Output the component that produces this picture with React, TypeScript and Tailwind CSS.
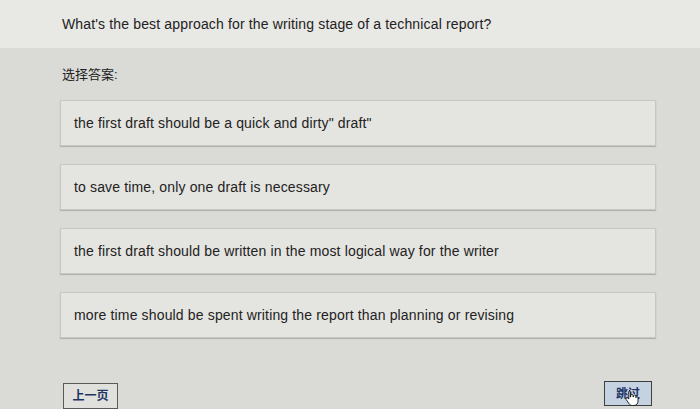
import React from 'react'

const options = [
  'the first draft should be a quick and dirty" draft"',
  'to save time, only one draft is necessary',
  'the first draft should be written in the most logical way for the writer',
  'more time should be spent writing the report than planning or revising',
]

function HandCursor() {
  return (
    <svg width="14" height="17" viewBox="0 0 14 17" className="absolute left-[20px] top-[7px]">
      <path
        d="M4 1.5c.8 0 1.3.6 1.3 1.3V8h.4V6.6c0-.7.5-1.2 1.2-1.2s1.2.5 1.2 1.2V8h.3V7.2c0-.7.5-1.2 1.2-1.2s1.2.5 1.2 1.2V8.6h.2c0-.6.5-1 1-1 .6 0 1 .4 1 1.1v3.6c0 2.3-1.6 4.2-4 4.2H7.3c-1.4 0-2.4-.6-3.2-1.7L1.2 10.6c-.4-.6-.3-1.3.2-1.7.5-.4 1.2-.3 1.6.2l.8 1V2.8c0-.7.5-1.3 1.2-1.3z"
        fill="#fff"
        stroke="#111"
        strokeWidth="0.9"
      />
    </svg>
  )
}

export default function App() {
  return (
    <div
      className="w-[700px] h-[409px] overflow-hidden bg-[#dadad6] text-[#222]"
      style={{ fontFamily: '"Liberation Sans", "Noto Sans CJK SC", sans-serif' }}
    >
      {/* Question */}
      <div className="h-[48px] bg-[#e8e8e5] flex items-center pl-[62px] text-[14px] tracking-[0.15px]">
        What's the best approach for the writing stage of a technical report?
      </div>

      <div className="pl-[60px] pr-[44px]">
        <div className="h-[52px] flex items-center pl-[2px] pt-[1px] text-[13px]">选择答案:</div>

        <div className="flex flex-col gap-[18px]">
          {options.map((o) => (
            <div
              key={o}
              className="h-[46px] flex items-center px-[13px] bg-[#e4e4e0] border border-[#c6c6c2] shadow-[0_1px_1px_rgba(0,0,0,0.18)] text-[14px] tracking-[0.15px]"
            >
              {o}
            </div>
          ))}
        </div>

        {/* Footer buttons */}
        <div className="mt-[43px] flex justify-between items-start pl-[3px]">
          <button className="mt-[2px] w-[55px] h-[26px] border border-[#5a5a5a] bg-[#e0e0dc] text-[#1e3566] text-[12px] font-bold flex items-center justify-center">
            上一页
          </button>
          <button className="relative mr-[4px] w-[48px] h-[25px] border border-[#3e3e3e] bg-[#c5d2e2] text-[#1e3566] text-[12px] font-bold flex items-center justify-center">
            跳过
            <HandCursor />
          </button>
        </div>
      </div>
    </div>
  )
}
